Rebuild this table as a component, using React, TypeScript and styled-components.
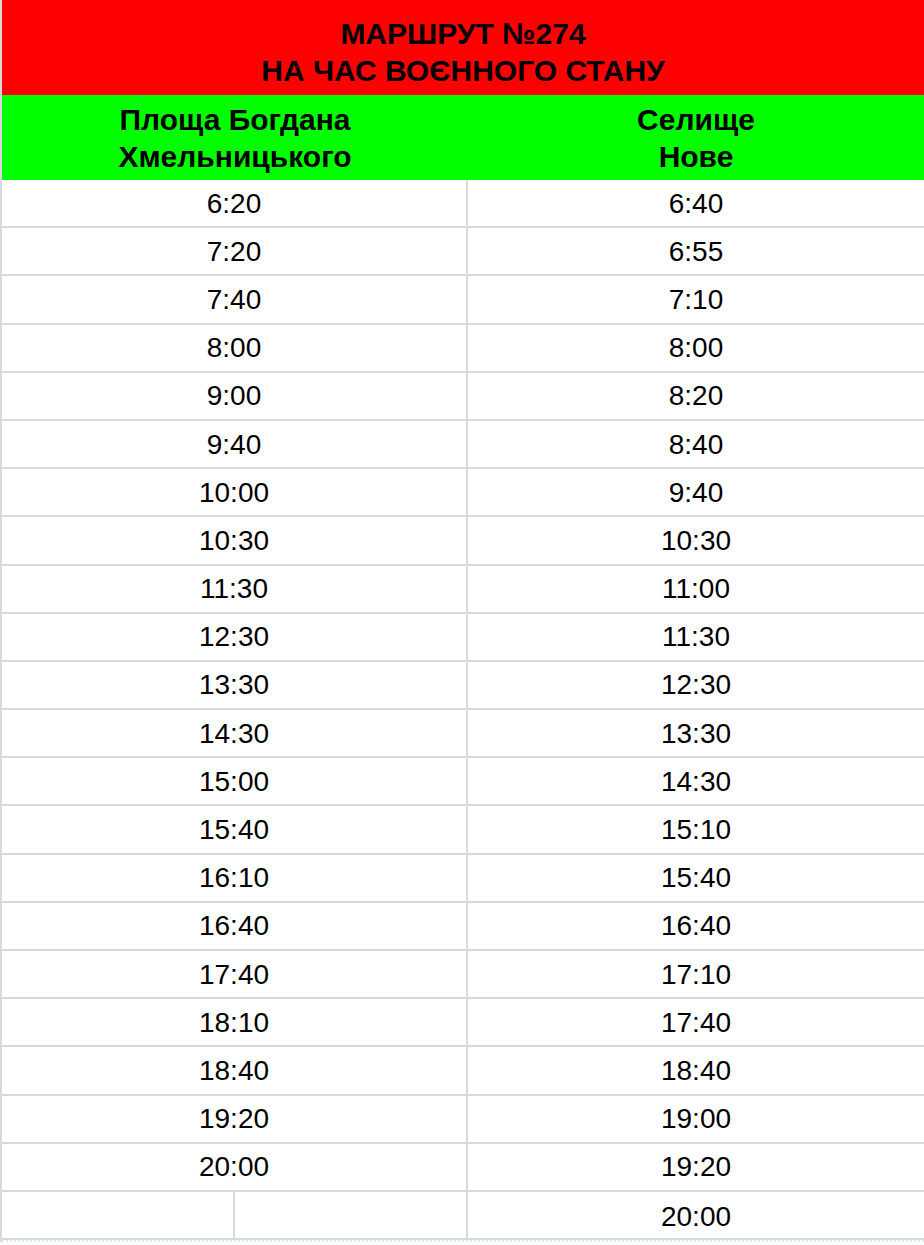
import styled, { createGlobalStyle } from 'styled-components';

const GlobalStyle = createGlobalStyle`
	html, body {
		margin: 0;
		padding: 0;
		background: #ffffff;
	}
	body {
		font-family: 'Liberation Sans', Arial, sans-serif;
		color: #000000;
	}
`;

const GRID = '#d9d9d9';
const ROW_HEIGHT = 48.19;

const departures: [string, string][] = [
	['6:20', '6:40'],
	['7:20', '6:55'],
	['7:40', '7:10'],
	['8:00', '8:00'],
	['9:00', '8:20'],
	['9:40', '8:40'],
	['10:00', '9:40'],
	['10:30', '10:30'],
	['11:30', '11:00'],
	['12:30', '11:30'],
	['13:30', '12:30'],
	['14:30', '13:30'],
	['15:00', '14:30'],
	['15:40', '15:10'],
	['16:10', '15:40'],
	['16:40', '16:40'],
	['17:40', '17:10'],
	['18:10', '17:40'],
	['18:40', '18:40'],
	['19:20', '19:00'],
	['20:00', '19:20'],
	['', '20:00'],
];

const Sheet = styled.div`
	width: 924px;
	box-sizing: border-box;
	border-left: 2px solid ${GRID};
	display: flex;
	flex-direction: column;
`;

const TitleBar = styled.header`
	height: 95px;
	background: #ff0000;
	display: flex;
	flex-direction: column;
	align-items: center;
	justify-content: center;
	font-weight: bold;
	font-size: 30px;
	line-height: 37px;
	padding-top: 8px;
	box-sizing: border-box;
`;

const StopsRow = styled.div`
	height: 85px;
	background: #00ff00;
	display: grid;
	grid-template-columns: 466px 1fr;
`;

const StopName = styled.div`
	display: flex;
	flex-direction: column;
	align-items: center;
	justify-content: center;
	font-weight: bold;
	font-size: 30px;
	line-height: 37px;
`;

const Table = styled.div`
	display: grid;
	grid-template-columns: 466px 1fr;
	grid-auto-rows: ${ROW_HEIGHT}px;
`;

const Cell = styled.div<{ $divider?: boolean; $last?: boolean }>`
	box-sizing: border-box;
	display: flex;
	align-items: center;
	justify-content: center;
	font-size: 28px;
	border-bottom: ${(p) => (p.$last ? 4 : 2)}px solid ${GRID};
	border-right: ${(p) => (p.$divider ? `2px solid ${GRID}` : 'none')};
	padding-top: ${(p) => (p.$last ? 3 : 1)}px;
	height: ${(p) => (p.$last ? ROW_HEIGHT + 2 : ROW_HEIGHT)}px;
`;

const SplitCell = styled.div`
	box-sizing: border-box;
	display: grid;
	grid-template-columns: 233px 1fr;
	border-right: 2px solid ${GRID};
	border-bottom: 4px solid ${GRID};
	height: ${ROW_HEIGHT + 2}px;
`;

const SplitPart = styled.div`
	border-right: 2px solid ${GRID};
`;

const Footer = styled.div`
	height: 2px;
	background: repeating-linear-gradient(90deg, #d5f3e4 0 2px, #ffffff 2px 4px);
`;

const App = () => {
	return (
		<>
			<GlobalStyle />
			<Sheet>
				<TitleBar>
					<div>МАРШРУТ №274</div>
					<div>НА ЧАС ВОЄННОГО СТАНУ</div>
				</TitleBar>
				<StopsRow>
					<StopName>
						<div>Площа Богдана</div>
						<div>Хмельницького</div>
					</StopName>
					<StopName>
						<div>Селище</div>
						<div>Нове</div>
					</StopName>
				</StopsRow>
				<Table>
					{departures.map(([from, to], i) => {
						const last = i === departures.length - 1;
						return (
							<>
								{last && !from ? (
									<SplitCell key={`a${i}`}>
										<SplitPart />
										<div />
									</SplitCell>
								) : (
									<Cell key={`a${i}`} $divider $last={last}>
										{from}
									</Cell>
								)}
								<Cell key={`b${i}`} $last={last}>
									{to}
								</Cell>
							</>
						);
					})}
				</Table>
				<Footer />
			</Sheet>
		</>
	);
};

export default App;
